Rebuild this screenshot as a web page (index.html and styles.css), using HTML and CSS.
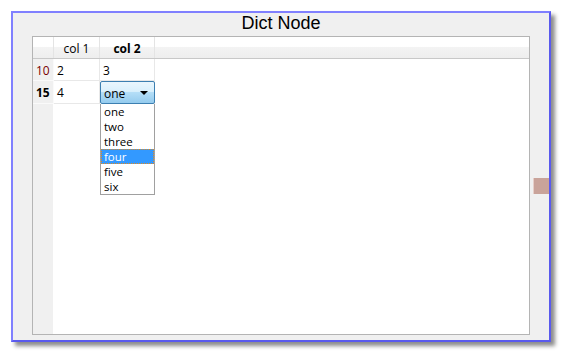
FILE: index.html
```html
<!DOCTYPE html>
<html lang="en">
<head>
  <meta charset="UTF-8" />
  <title>Dict Node</title>
  <link rel="stylesheet" href="styles.css">
</head>
<body>

<div class="node">
  <div class="title">Dict Node</div>

  <div class="grid">
    <div class="head">
      <div class="corner"></div>
      <div class="hcell">col 1</div>
      <div class="hcell bold">col 2</div>
      <div class="hfill"></div>
    </div>

    <div class="row">
      <div class="rh key">10</div>
      <div class="cell">2</div>
      <div class="cell">3</div>
    </div>
    <div class="row">
      <div class="rh bold">15</div>
      <div class="cell">4</div>
      <div class="cell editing">
        <div class="combo">
          <span>one</span>
          <span class="arrow"></span>
        </div>
        <ul class="list">
          <li>one</li>
          <li>two</li>
          <li>three</li>
          <li class="sel">four</li>
          <li>five</li>
          <li>six</li>
        </ul>
      </div>
    </div>
  </div>

  <div class="port"></div>
</div>

</body>
</html>
```

FILE: styles.css
```css
* {
  margin: 0;
  padding: 0;
  box-sizing: border-box;
}
body, html {
  height: 100%;
  background: white;
  font-family: 'Open Sans', sans-serif;
  overflow: hidden;
}

.node {
  position: relative;
  margin: 11px 0 0 11px;
  width: 540px;
  height: 331px;
  background: #f0f0f0;
  border: 2px solid #5a5aee;
  border-left-color: #8080ff;
  border-top-color: #8080ff;
  box-shadow: 4px 4px 4px rgba(0, 0, 0, 0.45);
  display: flex;
  flex-direction: column;
  padding: 0 19px 5px 19px;
}

.title {
  height: 23px;
  line-height: 21px;
  text-align: center;
  font-family: 'Liberation Sans', sans-serif;
  font-size: 18px;
  color: black;
}

.grid {
  flex: 1;
  border: 1px solid #b4b4b4;
  background: linear-gradient(to right, #f0f0f0 20px, white 20px);
  font-size: 12px;
  color: black;
}

.head {
  display: flex;
  height: 22px;
  background: linear-gradient(to bottom, #ffffff 0%, #ffffff 45%, #f3f3f3 50%, #eeeeee 100%);
  border-bottom: 1px solid #c8c8c8;
}
.corner {
  width: 21px;
  border-right: 1px solid #e4e4e4;
}
.hcell {
  line-height: 21px;
  padding-top: 1px;
  text-align: center;
  border-right: 1px solid #e4e4e4;
}
.hcell:nth-child(2) {
  width: 46px;
}
.hcell:nth-child(3) {
  width: 55px;
}
.hfill {
  flex: 1;
}
.bold {
  font-weight: bold;
}

.row {
  display: flex;
  height: 22px;
}
.row + .row {
  height: 23px;
}
.rh {
  width: 21px;
  padding: 2px 0 0 3px;
  line-height: 19px;
  background: #f0f0f0;
  border-right: 1px solid #fafafa;
  border-bottom: 1px solid #fafafa;
}
.rh.key {
  color: #7a0000;
}
.cell {
  line-height: 19px;
  padding: 2px 0 0 3px;
  background: white;
  border-right: 1px solid #e8e8e8;
  border-bottom: 1px solid #e8e8e8;
}
.cell:nth-child(2) {
  width: 46px;
}
.cell:nth-child(3) {
  width: 55px;
}

.editing {
  position: relative;
  padding: 0;
  border-bottom: none;
}
.combo {
  position: absolute;
  left: 0;
  top: 0;
  width: 55px;
  height: 23px;
  border: 1px solid #3c7fb1;
  border-radius: 2px;
  background: linear-gradient(to bottom, #eaf6fd 0%, #d9f0fc 45%, #b4def7 50%, #94cbee 100%);
  display: flex;
  align-items: center;
  justify-content: space-between;
  padding: 2px 6px 0 3px;
  line-height: 18px;
}
.arrow {
  width: 0;
  height: 0;
  margin-bottom: 2px;
  border-left: 4px solid transparent;
  border-right: 4px solid transparent;
  border-top: 4px solid black;
}

.list {
  position: absolute;
  left: 0;
  top: 23px;
  width: 55px;
  list-style: none;
  background: white;
  border: 1px solid #a0a0a0;
  border-top: none;
  font-size: 11.5px;
  z-index: 2;
}
.list li {
  height: 15px;
  line-height: 15px;
  padding-left: 3px;
}
.list li.sel {
  background: #3399ff;
  color: white;
  border: 1px dotted #e08a20;
  line-height: 13px;
  padding-left: 2px;
}

.port {
  position: absolute;
  right: 0;
  top: 165px;
  width: 16px;
  height: 16px;
  background: #c9a39a;
  border-left: 1px solid #e6cfca;
}
```
